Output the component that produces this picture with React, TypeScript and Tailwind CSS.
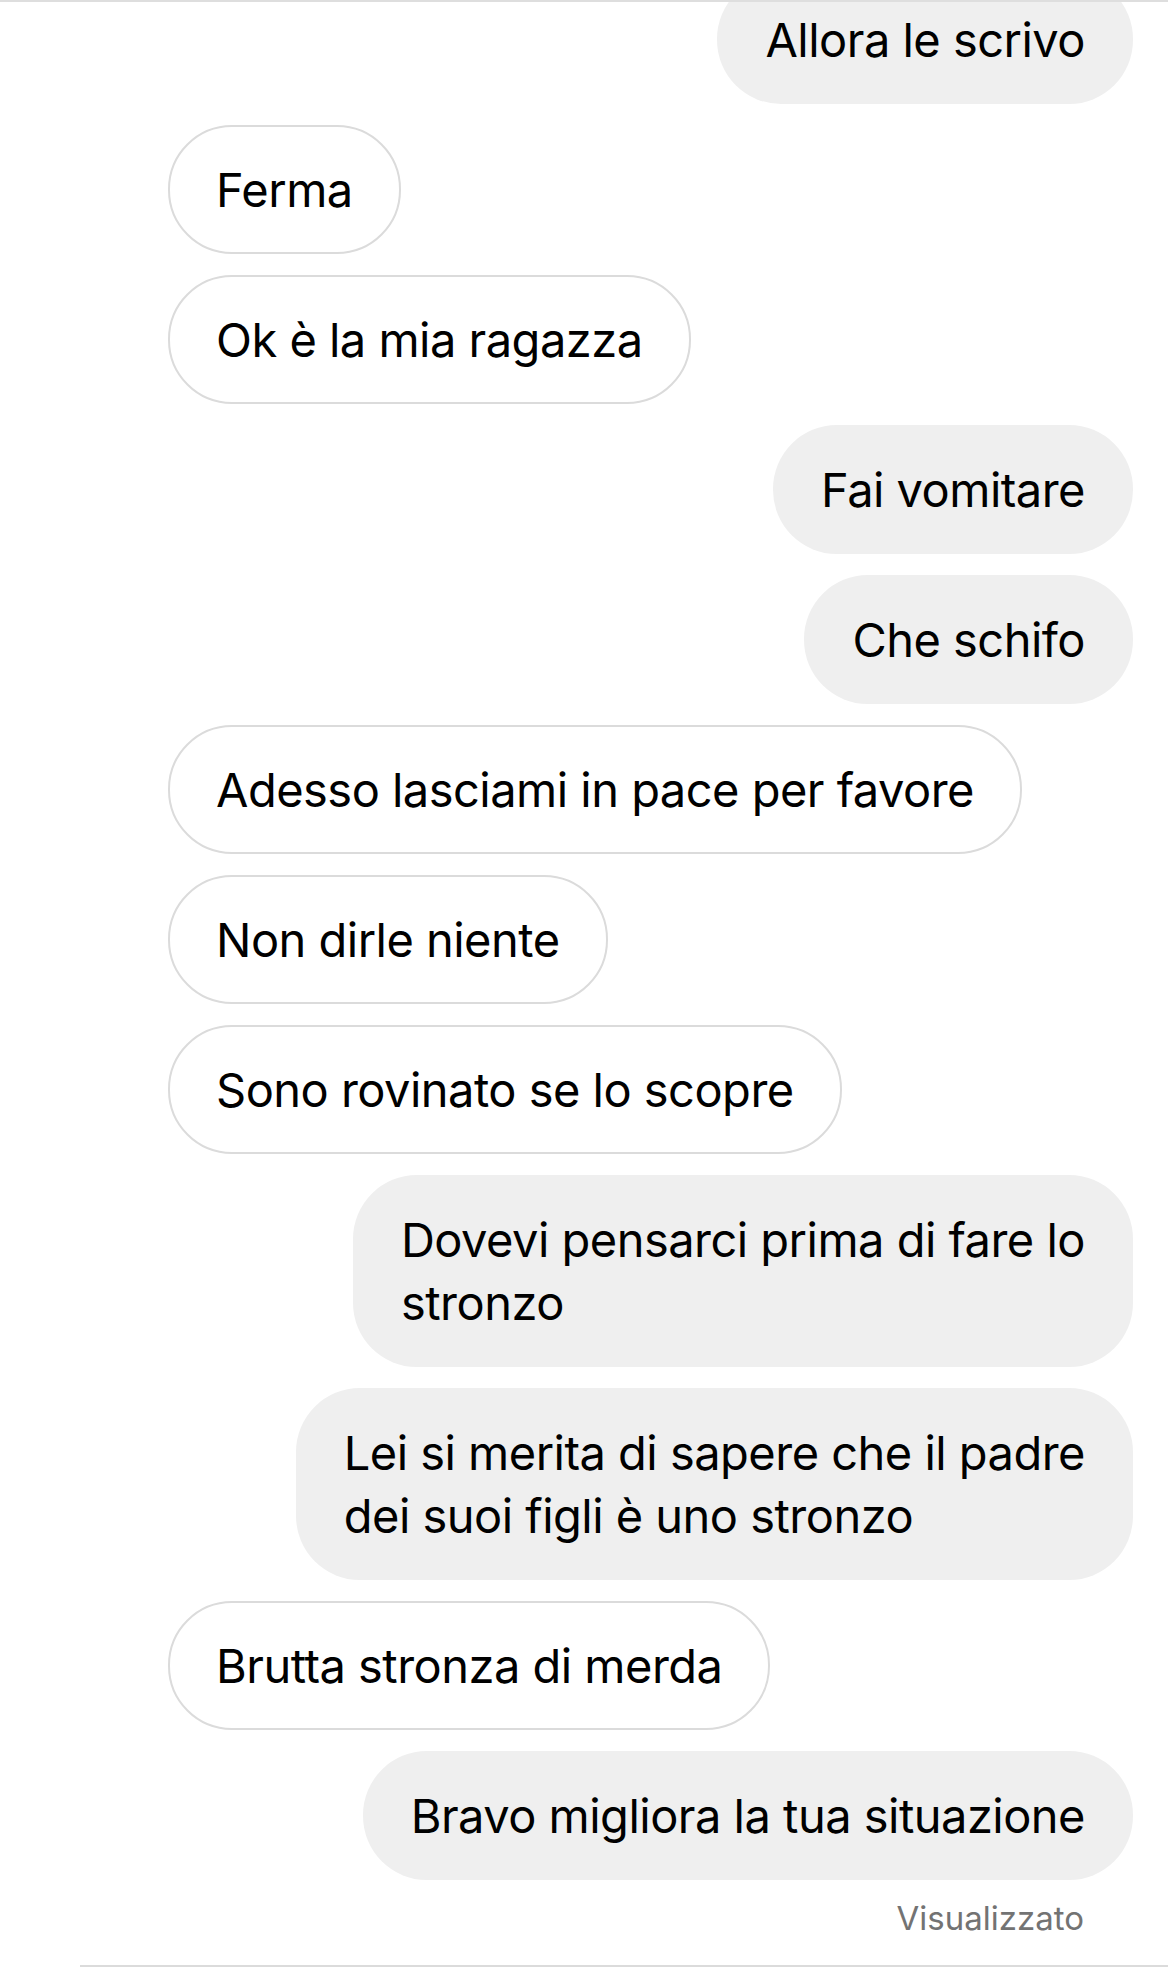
import React from 'react';

type Message = {
    mine: boolean;
    lines: string[];
};

const messages: Message[] = [
    { mine: true, lines: ['Allora le scrivo'] },
    { mine: false, lines: ['Ferma'] },
    { mine: false, lines: ['Ok è la mia ragazza'] },
    { mine: true, lines: ['Fai vomitare'] },
    { mine: true, lines: ['Che schifo'] },
    { mine: false, lines: ['Adesso lasciami in pace per favore'] },
    { mine: false, lines: ['Non dirle niente'] },
    { mine: false, lines: ['Sono rovinato se lo scopre'] },
    { mine: true, lines: ['Dovevi pensarci prima di fare lo', 'stronzo'] },
    { mine: true, lines: ['Lei si merita di sapere che il padre', 'dei suoi figli è uno stronzo'] },
    { mine: false, lines: ['Brutta stronza di merda'] },
    { mine: true, lines: ['Bravo migliora la tua situazione'] },
];

function Bubble({ message }: { message: Message }) {
    const lines = message.lines.map((line, i) => (
        <span key={i} className="block whitespace-nowrap">
            {line}
        </span>
    ));

    if (message.mine) {
        return (
            <div className="flex justify-end pr-[35px]">
                <div className="rounded-[64px] bg-[#efefef] px-[48px] py-[33px] text-black">
                    {lines}
                </div>
            </div>
        );
    }

    return (
        <div className="flex justify-start pl-[168px]">
            <div className="rounded-[64px] border-2 border-[#dbdbdb] bg-white px-[46px] py-[31px] text-black">
                {lines}
            </div>
        </div>
    );
}

export default function App() {
    return (
        <div className="flex h-[1967px] w-[1168px] flex-col overflow-hidden border-t-2 border-[#dedede] bg-white font-['Inter',sans-serif] text-[47px] leading-[63px] tracking-[-0.011em]">
            <div className="-mt-[27px] flex flex-col gap-[21px]">
                {messages.map((m, i) => (
                    <Bubble key={i} message={m} />
                ))}
            </div>
            <p className="mt-[18px] pr-[84px] text-right text-[33px] leading-[40px] tracking-normal text-[#737373]">
                Visualizzato
            </p>
            <div className="mt-auto ml-[80px] h-[2px] bg-[#dbdbdb]" />
        </div>
    );
}
